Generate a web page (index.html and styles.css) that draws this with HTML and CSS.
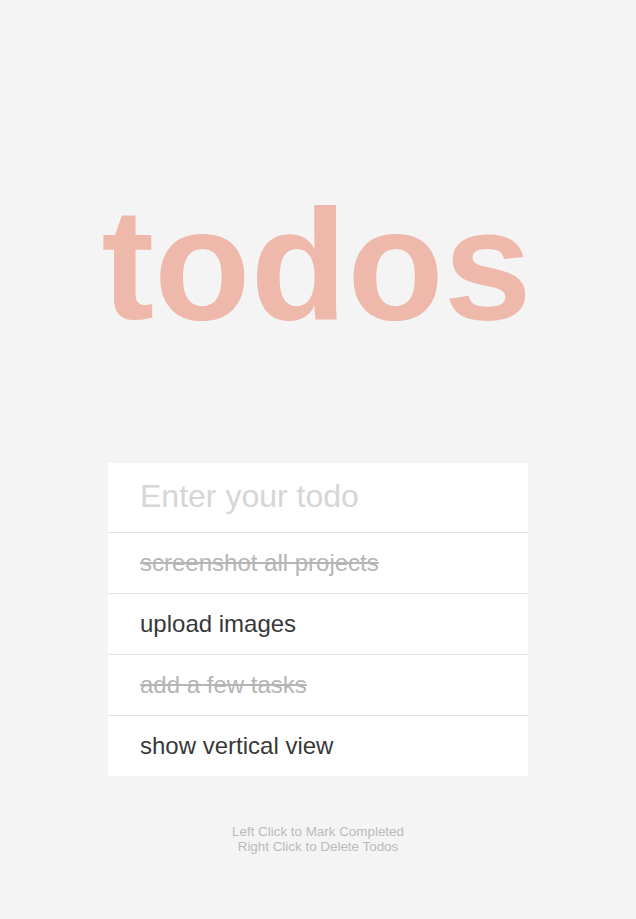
FILE: index.html
```html
<!DOCTYPE html>
<html lang="en">
<head>
<meta charset="utf-8">
<title>todos</title>
<link rel="stylesheet" href="styles.css">
</head>
<body>
<main class="app">
  <h1 class="title">todos</h1>
  <section class="card">
    <input class="new-todo" type="text" placeholder="Enter your todo">
    <ul class="list">
      <li class="item done">screenshot all projects</li>
      <li class="item">upload images</li>
      <li class="item done">add a few tasks</li>
      <li class="item">show vertical view</li>
    </ul>
  </section>
  <p class="hint">Left Click to Mark Completed<br>Right Click to Delete Todos</p>
</main>
</body>
</html>
```
FILE: styles.css
```css
html, body {
  margin: 0;
  padding: 0;
  background: #f4f4f4;
  font-family: "Liberation Sans", Arial, sans-serif;
}
.app {
  display: flex;
  flex-direction: column;
  align-items: center;
  padding-top: 184px;
}
.title {
  margin: 0;
  font-size: 158px;
  line-height: 160px;
  font-weight: 700;
  color: #eeb9ab;
  letter-spacing: 0;
  padding-right: 3px;
}
.card {
  margin-top: 119px;
  width: 420px;
  background: #fff;
  display: flex;
  flex-direction: column;
}
.new-todo {
  box-sizing: border-box;
  width: 100%;
  height: 70px;
  margin: 0;
  border: 0;
  border-bottom: 1px solid #e3e3e3;
  padding: 0 32px 2px;
  font-family: inherit;
  font-size: 32px;
  color: #333;
  background: transparent;
  outline: none;
}
.new-todo::placeholder {
  color: #d6d6d6;
}
.list {
  list-style: none;
  margin: 0;
  padding: 0;
}
.item {
  box-sizing: border-box;
  height: 61px;
  padding: 0 32px;
  display: flex;
  align-items: center;
  font-size: 24px;
  color: #383838;
  border-bottom: 1px solid #e3e3e3;
}
.item:last-child {
  height: 60px;
  border-bottom: 0;
}
.item.done {
  color: #b5b5b5;
  text-decoration: line-through;
}
.hint {
  margin: 48px 0 0;
  text-align: center;
  font-size: 13.4px;
  line-height: 15px;
  color: #bbb;
}
```
